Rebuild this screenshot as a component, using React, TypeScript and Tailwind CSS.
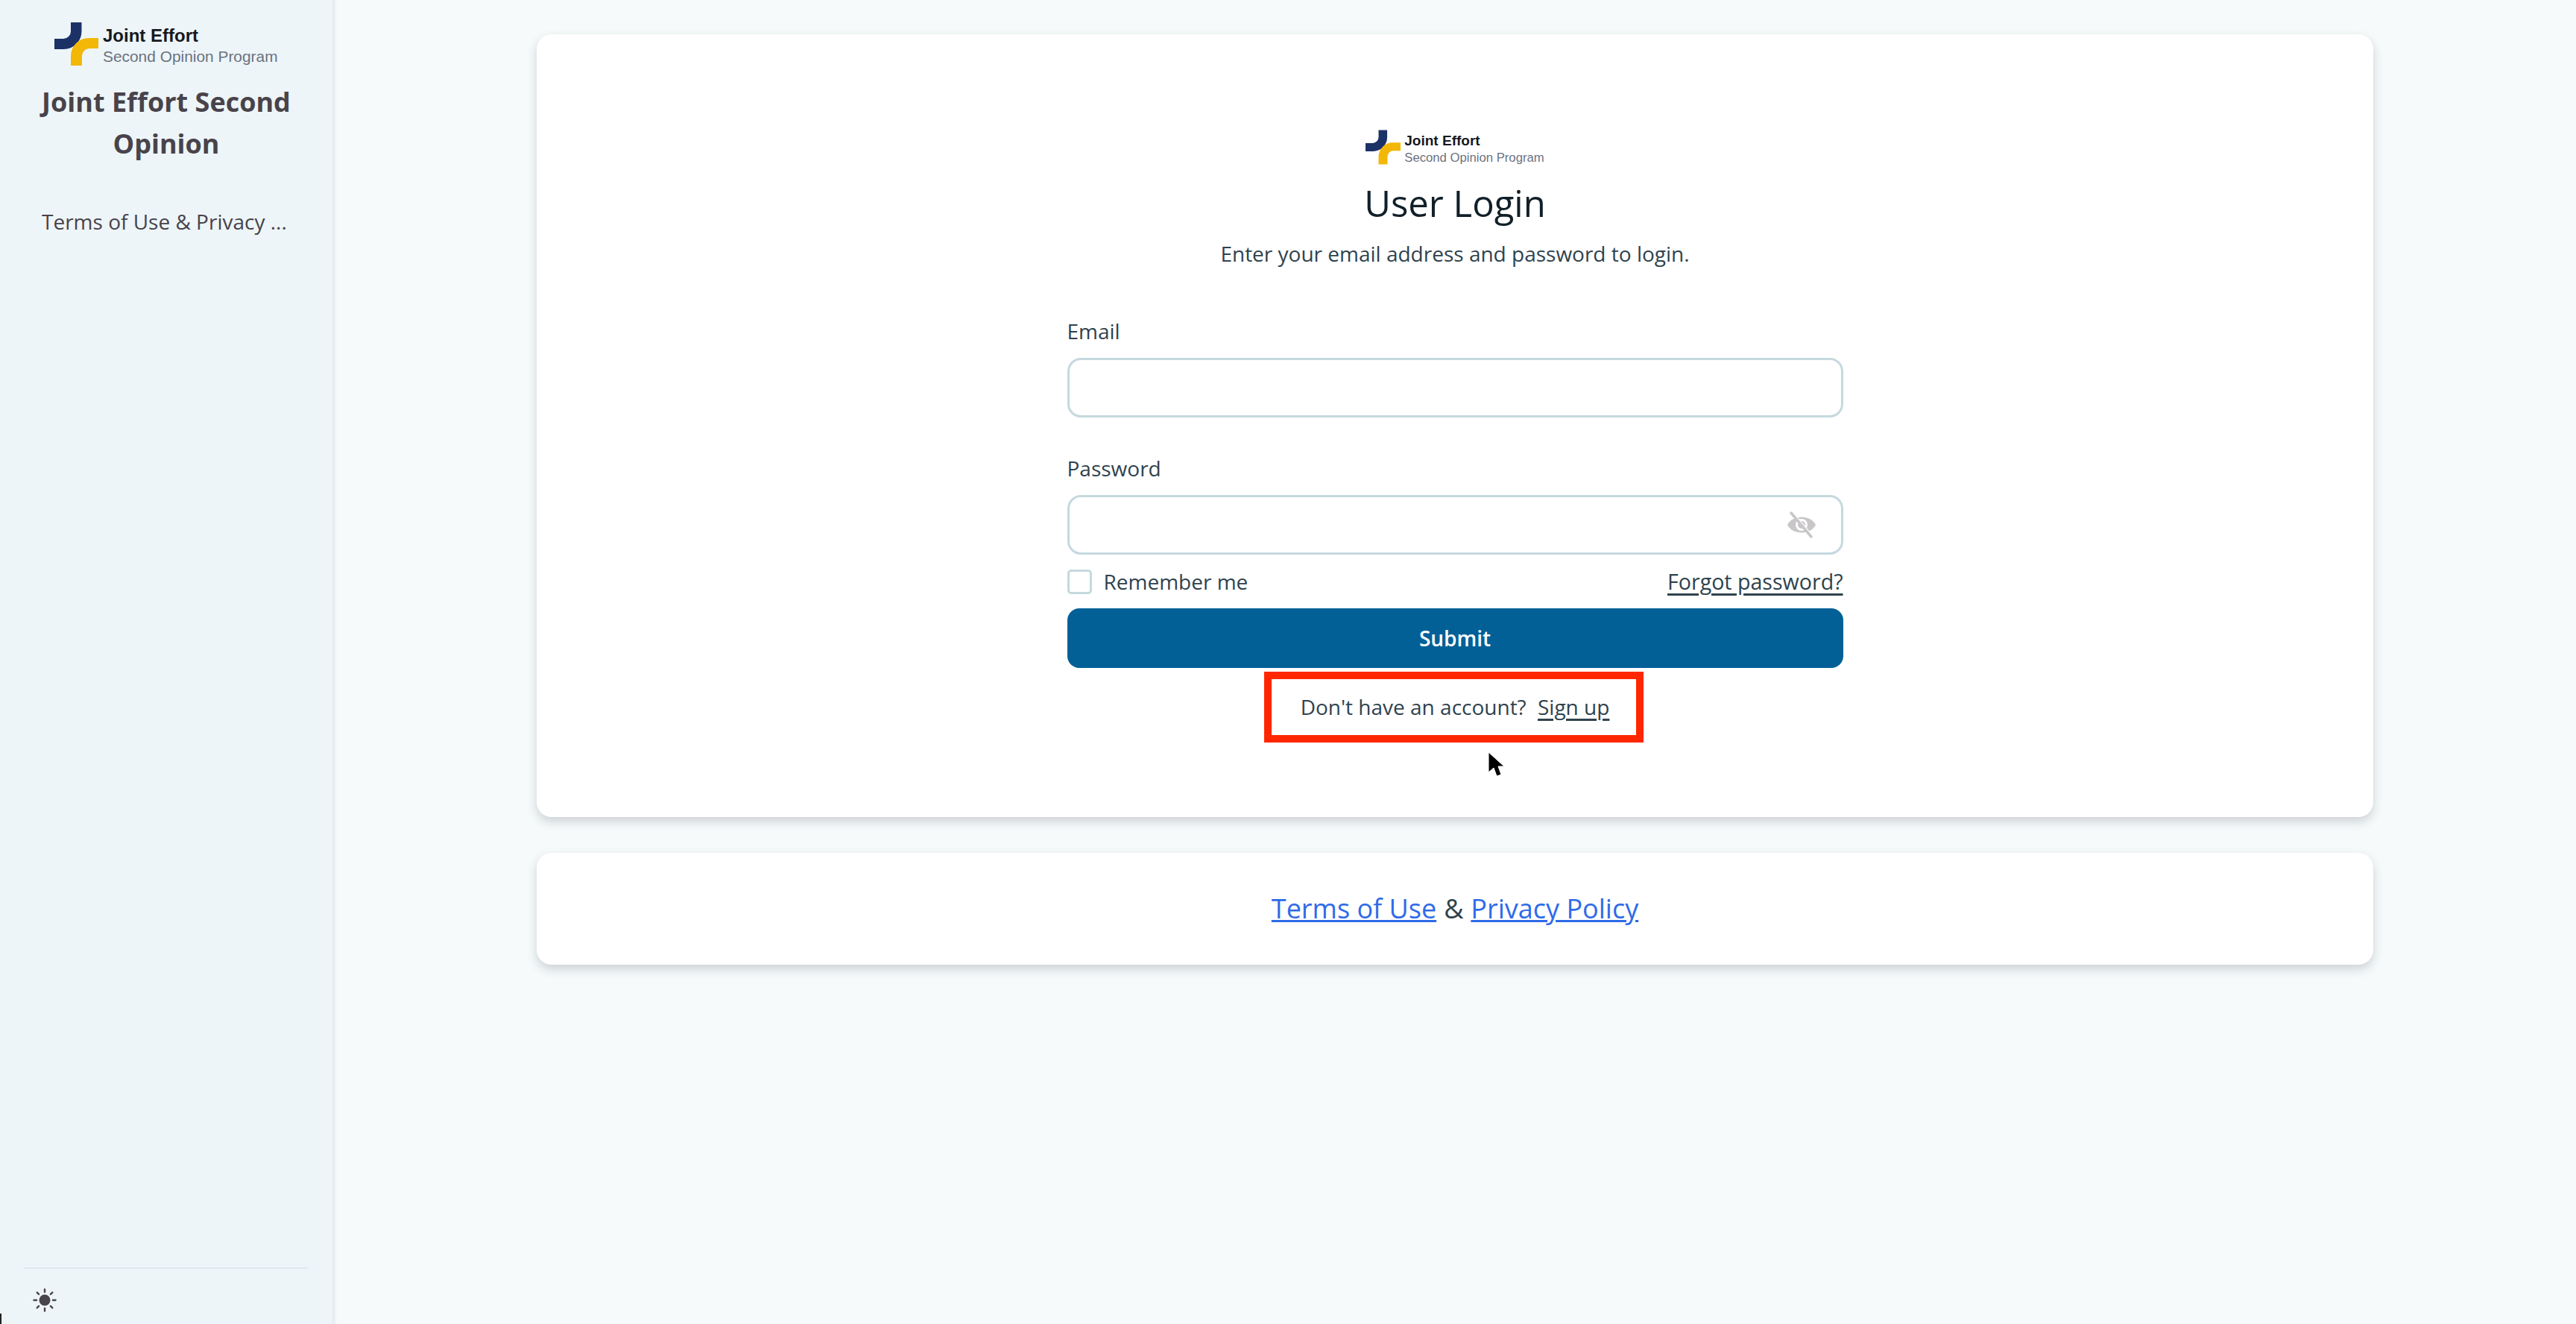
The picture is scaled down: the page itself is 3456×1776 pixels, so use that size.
const LogoMark = ({ className }: { className: string }) => (
  <svg viewBox="0 0 59 58" className={className}>
    <path
      d="M22 0h14.5v12a24 24 0 0 1-24 24H0V22h12a10 10 0 0 0 10-10z"
      fill="#1c3166"
    />
    <path
      d="M59 21v14H47a10 10 0 0 0-10 10v13H22V45a24 24 0 0 1 24-24z"
      fill="#f3b707"
    />
  </svg>
);

const SunIcon = () => (
  <svg viewBox="0 0 32 32" className="w-8 h-8" fill="#4a444c">
    <circle cx="16" cy="16" r="7.5" />
    <g stroke="#4a444c" strokeWidth="2.4" strokeLinecap="round">
      <path d="M16 1.5v3.5M16 27v3.5M1.5 16H5M27 16h3.5" />
      <path d="M5.7 5.7l2.4 2.4M23.9 23.9l2.4 2.4M5.7 26.3l2.4-2.4M23.9 8.1l2.4-2.4" />
    </g>
  </svg>
);

const EyeOffIcon = () => (
  <svg viewBox="0 0 38 38" className="w-[38px] h-[38px]">
    <path d="M0 19C7 5 31 5 38 19C31 33 7 33 0 19Z" fill="#c9c6c9" />
    <circle cx="19" cy="19" r="8" fill="#fff" />
    <circle cx="19" cy="19" r="5" fill="#c9c6c9" />
    <path d="M7 3l26 31" stroke="#fff" strokeWidth="3" />
    <path d="M5 3l27 32" stroke="#c9c6c9" strokeWidth="3.5" strokeLinecap="round" />
  </svg>
);

const App = () => {
  return (
    <div className="relative flex w-[3456px] h-[1776px] overflow-hidden bg-[#f6fafb] font-['Open_Sans',sans-serif]">
      {/* sidebar */}
      <aside className="flex flex-col w-[448px] h-full shrink-0 bg-[#edf5f8] border-r-2 border-r-[#e3ebf0] shadow-[2px_0_4px_rgba(60,80,100,0.08)] px-8">
        <div className="flex items-center h-[58px] mt-[30px] ml-[41px] gap-[6px] font-['Liberation_Sans',sans-serif]">
          <LogoMark className="w-[59px] h-[58px]" />
          <div className="flex flex-col pt-[3px]">
            <span className="text-[24px] leading-[30px] font-bold text-[#16191f]">
              Joint Effort
            </span>
            <span className="text-[20.9px] leading-[26px] text-[#6b7280]">
              Second Opinion Program
            </span>
          </div>
        </div>
        <h1 className="mt-[21px] text-center text-[36px] leading-[56px] font-bold text-[#48434a]">
          Joint Effort Second Opinion
        </h1>
        <a className="mt-[56px] ml-6 text-[28px] leading-[40px] text-[#48434a] whitespace-nowrap">
          Terms of Use &amp; Privacy ...
        </a>
        <div className="mt-auto border-t-2 border-t-[#dfe9f0] h-[76px] pl-[12px] pt-[26px]">
          <SunIcon />
        </div>
      </aside>

      {/* main */}
      <main className="flex-1 pt-[46px]">
        <div className="mx-auto w-[2464px] flex flex-col gap-[48px]">
          <section className="flex flex-col items-center h-[1050px] pt-[128px] bg-white rounded-[20px] shadow-[0_6px_14px_rgba(40,50,60,0.2)]">
            <div className="flex items-center gap-[5px] h-[47px] font-['Liberation_Sans',sans-serif]">
              <LogoMark className="w-[47px] h-[47px]" />
              <div className="flex flex-col pt-[3px]">
                <span className="text-[19px] leading-[24px] font-bold text-[#16191f]">
                  Joint Effort
                </span>
                <span className="text-[16.7px] leading-[21px] text-[#6b7280]">
                  Second Opinion Program
                </span>
              </div>
            </div>
            <h2 className="mt-[15px] text-[49px] leading-[72px] font-medium text-[#111f28]">
              User Login
            </h2>
            <p className="mt-[12px] text-[28px] leading-[40px] text-[#2f434d]">
              Enter your email address and password to login.
            </p>

            <form className="flex flex-col w-[1041px] mt-[64px] text-[28px] text-[#2f434d]">
              <label className="leading-[40px]">Email</label>
              <input
                type="text"
                className="mt-4 h-[80px] px-6 bg-white border-[3px] border-[#c5d9de] rounded-[18px]"
              />
              <label className="mt-[48px] leading-[40px]">Password</label>
              <div className="flex items-center justify-end mt-4 h-[80px] pr-[34px] bg-white border-[3px] border-[#c5d9de] rounded-[18px]">
                <EyeOffIcon />
              </div>
              <div className="flex items-center justify-between mt-[20px] h-[32px]">
                <label className="flex items-center gap-[16px] leading-[40px]">
                  <span className="w-[33px] h-[33px] bg-white border-[3px] border-[#c5d9de] rounded-[5px]" />
                  Remember me
                </label>
                <a className="underline underline-offset-[5px] decoration-[3px] leading-[40px] text-[28.6px]">
                  Forgot password?
                </a>
              </div>
              <button
                type="button"
                className="mt-[20px] h-[80px] bg-[#026097] rounded-[16px] text-white font-semibold"
              >
                Submit
              </button>
              <p className="mt-[32px] text-center leading-[40px]">
                Don't have an account?{" "}
                <a className="ml-[8px] underline underline-offset-[5px] decoration-[3px]">
                  Sign up
                </a>
              </p>
            </form>
          </section>

          <section className="flex items-center justify-center h-[150px] bg-white rounded-[20px] shadow-[0_6px_14px_rgba(40,50,60,0.2)] text-[36px] text-[#2f434d]">
            <a className="text-[#2f6be8] underline">Terms of Use</a>
            <span className="mx-[10px]">&amp;</span>
            <a className="text-[#2f6be8] underline">Privacy Policy</a>
          </section>
        </div>
      </main>

      {/* annotation drawn over the screenshot */}
      <div className="absolute left-[1696px] top-[901px] w-[509px] h-[95px] border-[10px] border-[#ff2600]" />
      {/* mouse cursor */}
      <svg viewBox="0 0 22 34" className="absolute left-[1996px] top-[1008px] w-[22px] h-[34px]">
        <path d="M1 1v27l7-6 4 11 6-2-4-11h8z" fill="#000" stroke="#fff" strokeWidth="1" />
      </svg>
      {/* rounded window corner showing through */}
      <div className="absolute left-0 bottom-0 w-[2px] h-[14px] bg-[#222]" />
    </div>
  );
};

export default App;
